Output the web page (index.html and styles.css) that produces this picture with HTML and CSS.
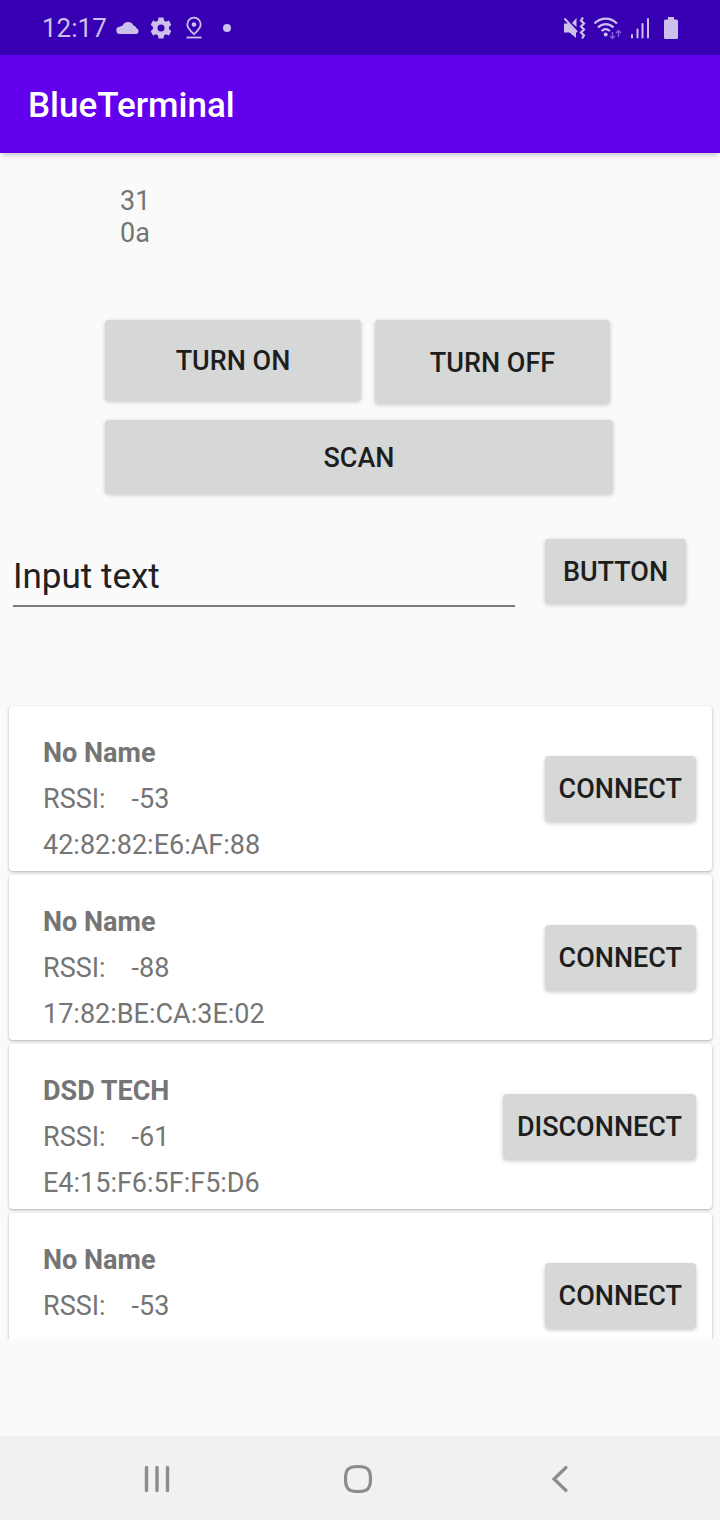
FILE: index.html
```html
<!DOCTYPE html>
<html lang="en">
<head>
<meta charset="utf-8">
<meta name="viewport" content="width=device-width, initial-scale=1">
<title>BlueTerminal</title>
<link rel="stylesheet" href="styles.css">
</head>
<body>
<div class="screen">
  <div class="status">
    <div class="status-left">
      <span class="clock">12:17</span>
      <svg width="24" height="24" viewBox="0 0 24 24" fill="currentColor"><path d="M4 18a3.600 3.600 0 0 1-.2-7.200Q5 9.800 6.500 9.800A6 6 0 0 1 17.500 9.500Q20 10 20.500 12.300A3 3 0 0 1 20.500 18z"/></svg>
      <svg width="24" height="24" viewBox="0 0 24 24" fill="currentColor"><path fill-rule="evenodd" d="M9.500 1.500h5l.5 3 2 1.200 2.900-1.100 2.400 4.200-2.300 2.200v2l2.300 2.200-2.400 4.200-2.900-1.100-2 1.200-.5 3h-5L9 19.500l-2-1.200-2.900 1.100-2.400-4.200L4 13v-2L1.700 8.800l2.400-4.200L7 5.700l2-1.200zM12 8.500a3.500 3.500 0 1 0 0 7 3.500 3.500 0 0 0 0-7z"/></svg>
      <svg width="24" height="24" viewBox="0 0 24 24" fill="none" stroke="currentColor" stroke-width="1.800"><path d="M12 18.200C8 14.500 5.300 11.500 5.300 8.400a6.700 6.700 0 0 1 13.400 0C18.700 11.500 16 14.500 12 18.200z"/><circle cx="12" cy="8.500" r="2.300" fill="currentColor" stroke="none"/><path d="M4.500 21.500h15"/></svg>
      <svg width="24" height="24" viewBox="0 0 24 24" fill="currentColor"><circle cx="12" cy="12" r="4"/></svg>
    </div>
    <div class="status-right">
      <svg width="24" height="24" viewBox="0 0 24 24" fill="currentColor"><path d="M2 7.500h4l8 8V22l-6.500-5.500H2zM14.500 2v9L10 7z"/><path d="M2.500 2.500 15 16" fill="none" stroke="currentColor" stroke-width="2"/><path d="m21 1.500-2 3 3 3-3 3 3 3-3 3 3 3-2 3" fill="none" stroke="currentColor" stroke-width="2.200"/></svg>
      <svg width="30" height="24" viewBox="0 0 30 24" fill="none" stroke="currentColor" stroke-width="2.200"><path d="M1.500 7.500c6.500-6.500 16-6.500 22.500 0M5 11.500c4.500-4.500 11-4.500 15.500 0M8.500 15c2.600-2.400 5.800-2.400 8.400 0"/><circle cx="12.700" cy="18.500" r="2" fill="currentColor" stroke="none"/><g opacity=".5" stroke-width="1.500"><path d="M19.500 16v6.500M17 20l2.500 2.500L22 20M25.500 21v-6.500M23 17l2.500-2.500L28 17"/></g></svg>
      <svg width="20" height="24" viewBox="0 0 20 24" fill="none" stroke="currentColor" stroke-width="2" stroke-linecap="round"><path d="M2 19v2.500M7.500 13.500v8M12.500 8v13.500M18 3v18.500"/></svg>
      <svg class="battery" width="16" height="24" viewBox="0 0 16 24" fill="currentColor"><path d="M5 1h6v2.500h2.500A1.500 1.500 0 0 1 15 5v16.500a1.500 1.500 0 0 1-1.500 1.500h-11A1.500 1.500 0 0 1 1 21.500V5a1.500 1.500 0 0 1 1.500-1.500H5z"/></svg>
    </div>
  </div>
  <header class="appbar"><h1 class="title">BlueTerminal</h1></header>
  <main class="content">
    <div class="readout">31<br>0a</div>
    <div class="controls">
      <div class="power">
        <button class="btn btn-on" type="button">TURN ON</button>
        <button class="btn btn-off" type="button">TURN OFF</button>
      </div>
      <button class="btn btn-scan" type="button">SCAN</button>
    </div>
    <form class="entry">
      <input class="field" type="text" value="Input text" aria-label="Input text">
      <button class="btn btn-send" type="button">BUTTON</button>
    </form>
    <ul class="devices">
      <li class="card">
        <div class="info"><strong>No Name</strong><span class="rssi"><span>RSSI:</span><span>-53</span></span><span>42:82:82:E6:AF:88</span></div>
        <button class="btn btn-link" type="button">CONNECT</button>
      </li>
      <li class="card">
        <div class="info"><strong>No Name</strong><span class="rssi"><span>RSSI:</span><span>-88</span></span><span>17:82:BE:CA:3E:02</span></div>
        <button class="btn btn-link" type="button">CONNECT</button>
      </li>
      <li class="card">
        <div class="info"><strong>DSD TECH</strong><span class="rssi"><span>RSSI:</span><span>-61</span></span><span>E4:15:F6:5F:F5:D6</span></div>
        <button class="btn btn-link" type="button">DISCONNECT</button>
      </li>
      <li class="card">
        <div class="info"><strong>No Name</strong><span class="rssi"><span>RSSI:</span><span>-53</span></span></div>
        <button class="btn btn-link" type="button">CONNECT</button>
      </li>
    </ul>
  </main>
  <nav class="navbar">
    <button class="nav-btn" type="button" aria-label="Recent apps"><svg width="32" height="32" viewBox="0 0 32 32" fill="none" stroke="currentColor" stroke-width="3.400" stroke-linecap="round"><path d="M5.500 4.500v23M16 4.500v23M26.500 4.500v23"/></svg></button>
    <button class="nav-btn" type="button" aria-label="Home"><svg width="32" height="32" viewBox="0 0 32 32" fill="none" stroke="currentColor" stroke-width="3.200"><path d="M16 3.500c9.500 0 12.500 3 12.500 12.500S25.500 28.500 16 28.500 3.500 25.500 3.500 16 6.500 3.500 16 3.500z"/></svg></button>
    <button class="nav-btn" type="button" aria-label="Back"><svg width="32" height="32" viewBox="0 0 32 32" fill="none" stroke="currentColor" stroke-width="3.200" stroke-linecap="round"><path d="M23 4.500 11 16l12 11.500"/></svg></button>
  </nav>
</div>
</body>
</html>
```
FILE: styles.css
```css
* {
  box-sizing: border-box;
}

body {
  margin: 0;
  background: #fafafa;
  color: #757575;
  font-family: Roboto, sans-serif;
  font-size: 27px;
}

.screen {
  display: flex;
  flex-direction: column;
  height: 100vh;
}

.status {
  display: flex;
  justify-content: space-between;
  align-items: center;
  height: 55px;
  padding: 0 41px 0 42px;
  background: #3700b3;
  color: #cdbfec;
}

.status svg {
  display: block;
}

.clock {
  font-size: 26px;
}

.status-left {
  display: flex;
  align-items: center;
  gap: 9px;
}

.status-right {
  display: flex;
  align-items: center;
  gap: 7px;
}

.battery {
  margin-left: 6px;
}

.appbar {
  display: flex;
  align-items: center;
  height: 98px;
  padding: 2px 28px 0;
  background: #6200ee;
  box-shadow: 0 4px 5px -2px rgba(0, 0, 0, 0.2);
}

.title {
  margin: 0;
  color: #fff;
  font-size: 35px;
  font-weight: 500;
}

.content {
  display: flex;
  flex: 1;
  flex-direction: column;
  min-height: 0;
  padding: 32px 0 97px;
}

.readout {
  padding-left: 120px;
  line-height: 32px;
}

.controls {
  display: flex;
  flex-direction: column;
  gap: 16px;
  margin: 71px 107px 0 105px;
}

.power {
  display: flex;
  align-items: flex-start;
  gap: 14px;
  padding-right: 3px;
}

.btn {
  padding: 0 14px;
  border: 0;
  border-radius: 4px;
  background: #d6d8d7;
  box-shadow: 0 1px 4px rgba(0, 0, 0, 0.2);
  color: #1e1e1e;
  font-family: inherit;
  font-size: 27px;
  font-weight: 500;
}

.btn-on {
  flex: 256 1 0;
  height: 81px;
  padding: 0;
}

.btn-off {
  flex: 235 1 0;
  height: 84px;
  padding: 1px 0 0;
}

.btn-scan {
  height: 74px;
  padding-top: 1px;
}

.entry {
  display: flex;
  align-items: flex-start;
  gap: 30px;
  margin: 45px 34px 0 13px;
}

.field {
  flex: 1;
  min-width: 0;
  height: 68px;
  padding: 8px 0 0;
  border: 0;
  border-bottom: 2px solid #7c7c7c;
  border-radius: 0;
  background: transparent;
  color: #212121;
  font-family: inherit;
  font-size: 35px;
}

.btn-send {
  width: 141px;
  height: 65px;
}

.devices {
  display: flex;
  flex: 1;
  flex-direction: column;
  gap: 4px;
  min-height: 0;
  margin: 98px 0 0;
  padding: 1px 8px 0 9px;
  overflow: hidden;
  list-style: none;
}

.card {
  display: flex;
  flex: none;
  justify-content: space-between;
  align-items: flex-start;
  height: 165px;
  padding: 24px 16px 0 34px;
  border-radius: 4px;
  background: #fff;
  box-shadow: 0 1px 3px rgba(0, 0, 0, 0.3);
}

.info {
  display: flex;
  flex-direction: column;
  line-height: 46px;
}

.rssi {
  display: flex;
  gap: 26px;
}

.btn-link {
  height: 65px;
  margin-top: 26px;
  box-shadow: 0 2px 4px rgba(0, 0, 0, 0.22);
}

.navbar {
  display: flex;
  justify-content: center;
  align-items: center;
  gap: 169px;
  height: 84px;
  padding: 2px 5px 0 0;
  background: #f1f1f1;
}

.nav-btn {
  display: block;
  padding: 0;
  border: 0;
  background: transparent;
  color: #8c8c8c;
}

.nav-btn svg {
  display: block;
}
```
